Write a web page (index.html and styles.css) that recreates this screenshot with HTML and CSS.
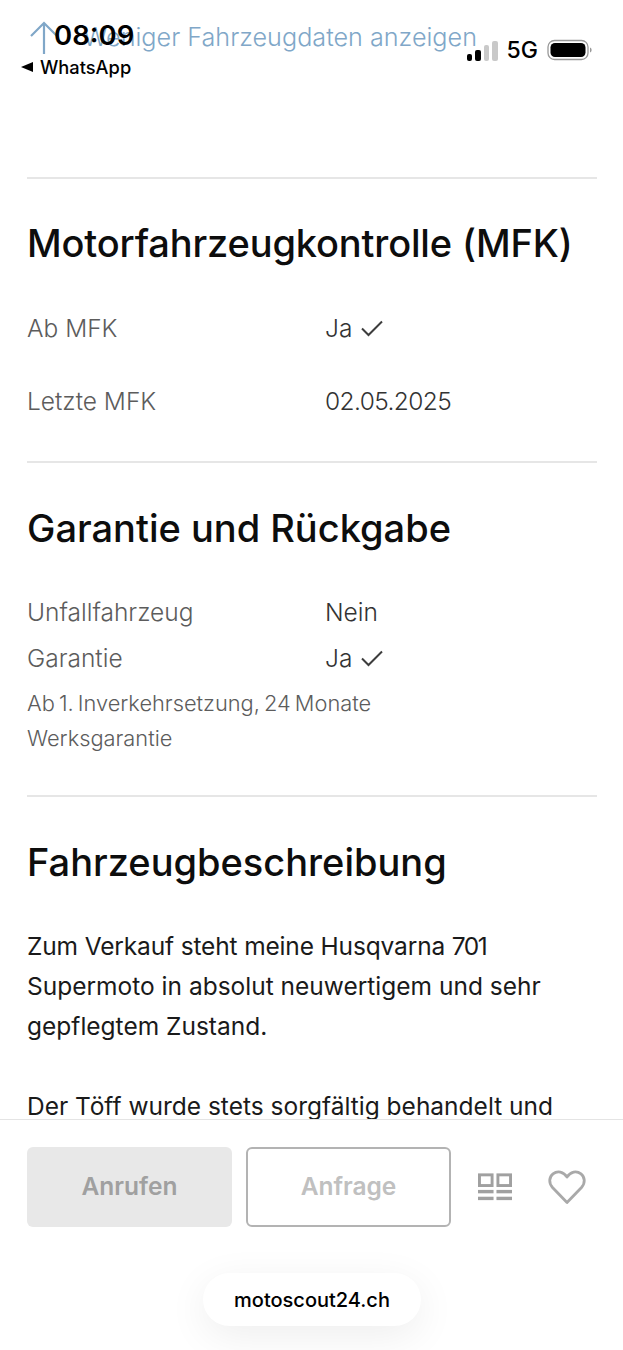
FILE: index.html
```html
<!DOCTYPE html>
<html lang="de">
<head>
<meta charset="utf-8">
<title>Fahrzeug</title>
<link rel="stylesheet" href="styles.css">
</head>
<body>
<div class="status">
  <div class="status-left">
    <div class="time">08:09</div>
    <div class="back"><span class="back-tri"></span>WhatsApp</div>
  </div>
  <div class="status-right">
    <div class="signal"><i class="on b1"></i><i class="on b2"></i><i class="b3"></i><i class="b4"></i></div>
    <span class="net">5G</span>
    <svg class="battery" width="46" height="22" viewBox="0 0 46 22"><rect x="1" y="1.5" width="40" height="19" rx="6.5" fill="none" stroke="#999" stroke-width="1.3"/><rect x="3.5" y="4" width="35" height="14" rx="4.5" fill="#000"/><path d="M43 8.5c1.2.4 1.6 1.4 1.6 2.5s-.4 2.1-1.6 2.5z" fill="#999"/></svg>
  </div>
</div>
<main class="page">
  <a class="less">
    <svg class="less-arrow" width="30" height="34" viewBox="0 0 30 34"><path d="M15 33V2M2 15 15 2l13 13" fill="none" stroke="#80a7c8" stroke-width="2.2"/></svg>
    <span>Weniger Fahrzeugdaten anzeigen</span>
  </a>
  <section class="sec sec-mfk">
    <h2 class="tight">Motorfahrzeugkontrolle (MFK)</h2>
    <dl class="rows rows-wide">
      <div class="row"><dt>Ab MFK</dt><dd>Ja <svg class="check" width="24" height="18" viewBox="0 0 24 18"><path d="M2 9.500 8.500 16 22 2.500" fill="none" stroke="#3d3d3d" stroke-width="2"/></svg></dd></div>
      <div class="row"><dt>Letzte MFK</dt><dd class="date">02.05.2025</dd></div>
    </dl>
  </section>
  <section class="sec sec-gar">
    <h2>Garantie und Rückgabe</h2>
    <dl class="rows">
      <div class="row"><dt>Unfallfahrzeug</dt><dd>Nein</dd></div>
      <div class="row"><dt>Garantie</dt><dd>Ja <svg class="check" width="24" height="18" viewBox="0 0 24 18"><path d="M2 9.500 8.500 16 22 2.500" fill="none" stroke="#3d3d3d" stroke-width="2"/></svg></dd></div>
    </dl>
    <p class="note">Ab 1. Inverkehrsetzung, 24 Monate Werksgarantie</p>
  </section>
  <section class="sec sec-desc">
    <h2>Fahrzeugbeschreibung</h2>
    <p class="desc"><span class="first">Zum Verkauf steht meine Husqvarna <span class="num">701</span></span> Supermoto in absolut neuwertigem und sehr gepflegtem Zustand.</p>
    <p class="desc">Der Töff wurde stets sorgfältig behandelt und</p>
  </section>
</main>
<div class="bar">
  <button class="btn btn-call">Anrufen</button>
  <button class="btn btn-ask">Anfrage</button>
  <svg class="compare" width="34" height="28" viewBox="0 0 35 28"><g fill="none" stroke="#a0a0a0" stroke-width="3"><rect x="1.500" y="1.500" width="13" height="11"/><rect x="20.500" y="1.500" width="13" height="11"/></g><g fill="#a0a0a0"><rect x="0" y="17" width="16" height="3.500"/><rect x="0" y="24" width="16" height="3.500"/><rect x="19" y="17" width="16" height="3.500"/><rect x="19" y="24" width="16" height="3.500"/></g></svg>
  <svg class="heart" width="38" height="36" viewBox="0 0 38 36"><path d="M19 33.500 4.500 18.500C.500 14 1 8 5 4.800 9.500 1.300 15.500 2.500 19 8c3.500-5.500 9.500-6.700 14-3.200 4 3.200 4.500 9.200.500 13.700z" fill="none" stroke="#a9a9a9" stroke-width="2.800" stroke-linejoin="round"/></svg>
</div>
<div class="url">motoscout24.ch</div>
</body>
</html>
```
FILE: styles.css
```css
* { box-sizing: border-box; }
html, body { margin: 0; padding: 0; }
body {
  width: 623px;
  height: 1350px;
  overflow: hidden;
  position: relative;
  background: #fff;
  font-family: "Inter", "Liberation Sans", sans-serif;
  color: #000;
}
.status {
  position: absolute;
  left: 0;
  top: 0;
  width: 623px;
  z-index: 3;
  display: flex;
  justify-content: space-between;
  align-items: flex-start;
  padding: 19px 30px 0 21px;
  font-family: "Inter", sans-serif;
}
.status-left { display: flex; flex-direction: column; }
.time { font-size: 27.500px; line-height: 32px; font-weight: 600; margin-left: 33px; }
.back { font-size: 18.300px; line-height: 22px; display: flex; align-items: center; gap: 7px; margin-top: 5px; font-weight: 500; }
.back-tri { width: 0; height: 0; border-style: solid; border-width: 5.500px 12px 5.500px 0; border-color: transparent #000 transparent transparent; }
.status-right { display: flex; align-items: center; gap: 9px; margin-top: 19px; }
.signal { display: flex; align-items: flex-end; gap: 3px; height: 21px; }
.signal i { width: 5.500px; border-radius: 2px; background: #c9c9c9; display: block; }
.signal .on { background: #000; }
.b1 { height: 7px; } .b2 { height: 11px; } .b3 { height: 16px; } .b4 { height: 20px; }
.net { font-size: 23px; line-height: 24px; font-weight: 500; }
.battery { display: block; }
.page { padding: 0 26px 0 27px; height: 1119px; overflow: hidden; }
.less {
  display: flex;
  align-items: center;
  height: 179px;
  padding: 20px 0 123px 3px;
  border-bottom: 2px solid #e6e6e6;
  color: #80a7c8;
  font-size: 25.200px;
  font-weight: 300;
}
.less span { white-space: nowrap; margin-left: 26px; }
.less-arrow { flex: none; margin-left: -1px; margin-right: -2px; margin-top: 2px; width: 30px; }
h2 { margin: 0; font-size: 38px; line-height: 48px; font-weight: 500; color: #0d0d0d; }
.tight { letter-spacing: -0.15px; }
.sec { border-bottom: 2px solid #e6e6e6; }
.sec-mfk { height: 284px; padding-top: 40px; }
.sec-gar { height: 334px; padding-top: 41px; }
.sec-desc { border-bottom: 0; padding-top: 41px; }
.rows { margin: 44px 0 0; display: flex; flex-direction: column; gap: 14px; }
.row { display: flex; font-size: 24.500px; line-height: 32px; font-weight: 300; }
.rows-wide { margin-top: 45px; gap: 41px; }
dt { width: 298px; color: #5c5c5c; }
dd { margin: 0; color: #333; display: flex; align-items: center; gap: 8px; }
.date { letter-spacing: -0.6px; }
.check { width: 24px; height: 18px; }
.note { margin: 12px 0 0; width: 400px; font-size: 21.800px; line-height: 35px; font-weight: 300; color: #5c5c5c; word-spacing: -2px; }
.desc { margin: 0 0 40px; font-size: 24.500px; line-height: 40px; font-weight: 400; color: #1a1a1a; }
.first { letter-spacing: -0.15px; }
.num { letter-spacing: -1.500px; }
h2 + .desc { margin-top: 40px; }
.bar {
  position: absolute;
  left: 0;
  top: 1119px;
  width: 623px;
  height: 231px;
  background: #fff;
  border-top: 1px solid #e4e4e4;
  display: flex;
  align-items: flex-start;
  padding: 27px 0 0 27px;
}
.btn {
  width: 205px;
  height: 80px;
  border-radius: 6px;
  font-family: "Inter", sans-serif;
  font-size: 24.500px;
  font-weight: 600;
  padding: 0 0 2px;
}
.btn-call { background: #e8e8e8; border: 0; color: #a0a0a0; }
.btn-ask { background: #fff; border: 2px solid #b3b3b3; color: #c0c0c0; margin-left: 14px; }
.compare { margin: 26px 0 0 27px; }
.heart { margin: 22px 0 0 36px; }
.url {
  position: absolute;
  left: 203px;
  top: 1273px;
  width: 218px;
  height: 53px;
  border-radius: 27px;
  background: #fff;
  box-shadow: 0 10px 40px rgba(0,0,0,0.07);
  text-align: center;
  font-size: 20px;
  font-weight: 500;
  line-height: 54px;
}
```
